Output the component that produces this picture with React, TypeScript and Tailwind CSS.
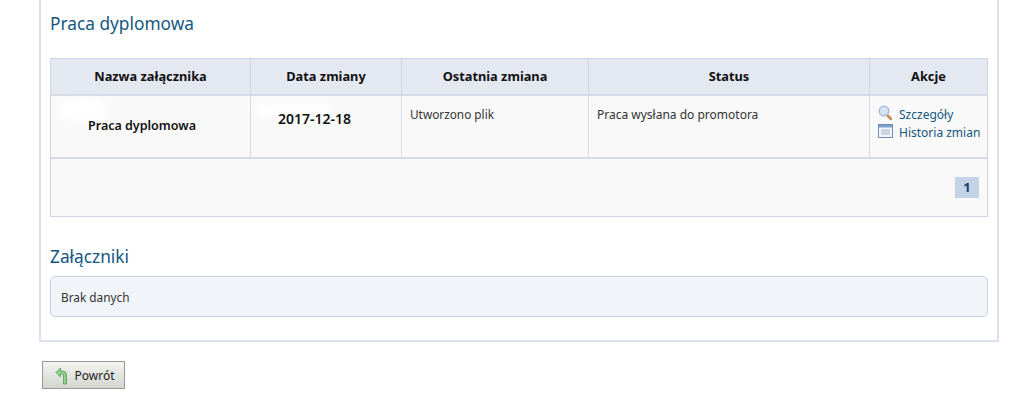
export default function App() {
  const th = "border-l border-[#d0d4e6] first:border-l-0 border-b-2 border-b-[#d6d9e6] pt-[1px] text-center font-bold text-[12.8px] text-[#111]";
  const td = "border-l border-[#d9dcec] first:border-l-0 border-b-2 border-b-[#d6d9e6] align-top";
  return (
    <div className="relative w-[1024px] h-[401px] overflow-hidden bg-white font-['Noto_Sans',sans-serif] text-[12px] text-[#333]">
      <div className="ml-[39px] w-[960px] h-[342px] border-2 border-t-0 border-[#dcdfee] pl-[9px] pt-[11px]">
        <h2 className="text-[17.3px] leading-[26px] text-[#14577f]">Praca dyplomowa</h2>
        <div className="mt-[21px] w-[938px] border border-[#d0d4e6] bg-[#f9f9f9] h-[159px]">
          <table className="w-full table-fixed border-separate border-spacing-0">
            <colgroup>
              <col className="w-[199px]" />
              <col className="w-[151px]" />
              <col className="w-[187px]" />
              <col className="w-[281px]" />
              <col />
            </colgroup>
            <thead>
              <tr className="h-[37px] bg-[#e4e8f1]">
                <th className={th}>Nazwa załącznika</th>
                <th className={th}>Data zmiany</th>
                <th className={th}>Ostatnia zmiana</th>
                <th className={th}>Status</th>
                <th className={th}>Akcje</th>
              </tr>
            </thead>
            <tbody>
              <tr className="h-[63px]">
                <td className={`${td} relative text-center pt-[21px] pr-[17px] text-[12.5px] font-semibold text-[#111]`}>
                  <span className="absolute left-[8px] top-[3px] h-[22px] w-[48px] rounded-full bg-white blur-[3px]" />
                  <span className="relative">Praca dyplomowa</span>
                </td>
                <td className={`${td} relative text-center pt-[12px] pr-[23px] text-[14px] font-semibold text-[#111]`}>
                  <span className="absolute left-[5px] top-[8px] h-[12px] w-[76px] rounded-full bg-white blur-[3px]" />
                  <span className="relative">2017-12-18</span>
                </td>
                <td className={`${td} px-[8px] pt-[10px] text-[11.8px]`}>Utworzono plik</td>
                <td className={`${td} px-[8px] pt-[10px]`}>Praca wysłana do promotora</td>
                <td className={`${td} pl-[8px] pt-[10px] text-[#14577f]`}>
                  <div className="flex items-center gap-[6px] h-[18px]">
                    <svg width="15" height="16" viewBox="0 0 15 16" className="shrink-0 -mt-[4px]">
                      <path d="M9 10l4 4" stroke="#c98a4a" strokeWidth="2.5" strokeLinecap="round" />
                      <circle cx="6" cy="6" r="4.8" fill="#d6e4f4" stroke="#a9bdd6" strokeWidth="1.5" />
                    </svg>
                    <span>Szczegóły</span>
                  </div>
                  <div className="flex items-center gap-[6px] h-[18px]">
                    <svg width="15" height="14" viewBox="0 0 15 14" className="shrink-0 -mt-[4px]">
                      <rect x="0.5" y="0.5" width="14" height="13" fill="#f3f6fa" stroke="#6f8fb8" />
                      <rect x="1" y="1" width="13" height="2.5" fill="#7e9fd0" />
                      <path d="M3 6h9M3 8h9M3 10h9" stroke="#a9b4c4" />
                    </svg>
                    <span>Historia zmian</span>
                  </div>
                </td>
              </tr>
            </tbody>
          </table>
          <div className="flex justify-end pt-[18px] pr-[8px]">
            <span className="flex h-[21px] w-[24px] items-center justify-center bg-[#c5d3e6] font-bold text-[13px] text-[#14466b]">1</span>
          </div>
        </div>
        <h2 className="mt-[27px] text-[17.3px] leading-[26px] text-[#14577f]">Załączniki</h2>
        <div className="mt-[6px] flex h-[41px] w-[938px] items-center rounded-[5px] border border-[#bfd3e3] bg-[#f1f5f9] pl-[10px] pt-[2px] text-[11.8px]">Brak danych</div>
      </div>
      <button className="ml-[42px] mt-[19px] flex h-[28px] w-[83px] items-center justify-center gap-[5px] border border-[#999] bg-gradient-to-b from-[#f4f5f1] to-[#d3d5cf] pl-[3px] pt-[1px] text-[12px] text-[#222]">
        <svg width="14" height="18" viewBox="0 0 14 18">
          <path d="M11.500 17V8Q11.500 4 7.500 4H5.500V1L1 5.500l4.500 4.500V7h2Q8.500 7 8.500 9v8z" fill="#8fd08a" stroke="#4c9a52" strokeWidth="0.8" />
        </svg>
        Powrót
      </button>
    </div>
  );
}
